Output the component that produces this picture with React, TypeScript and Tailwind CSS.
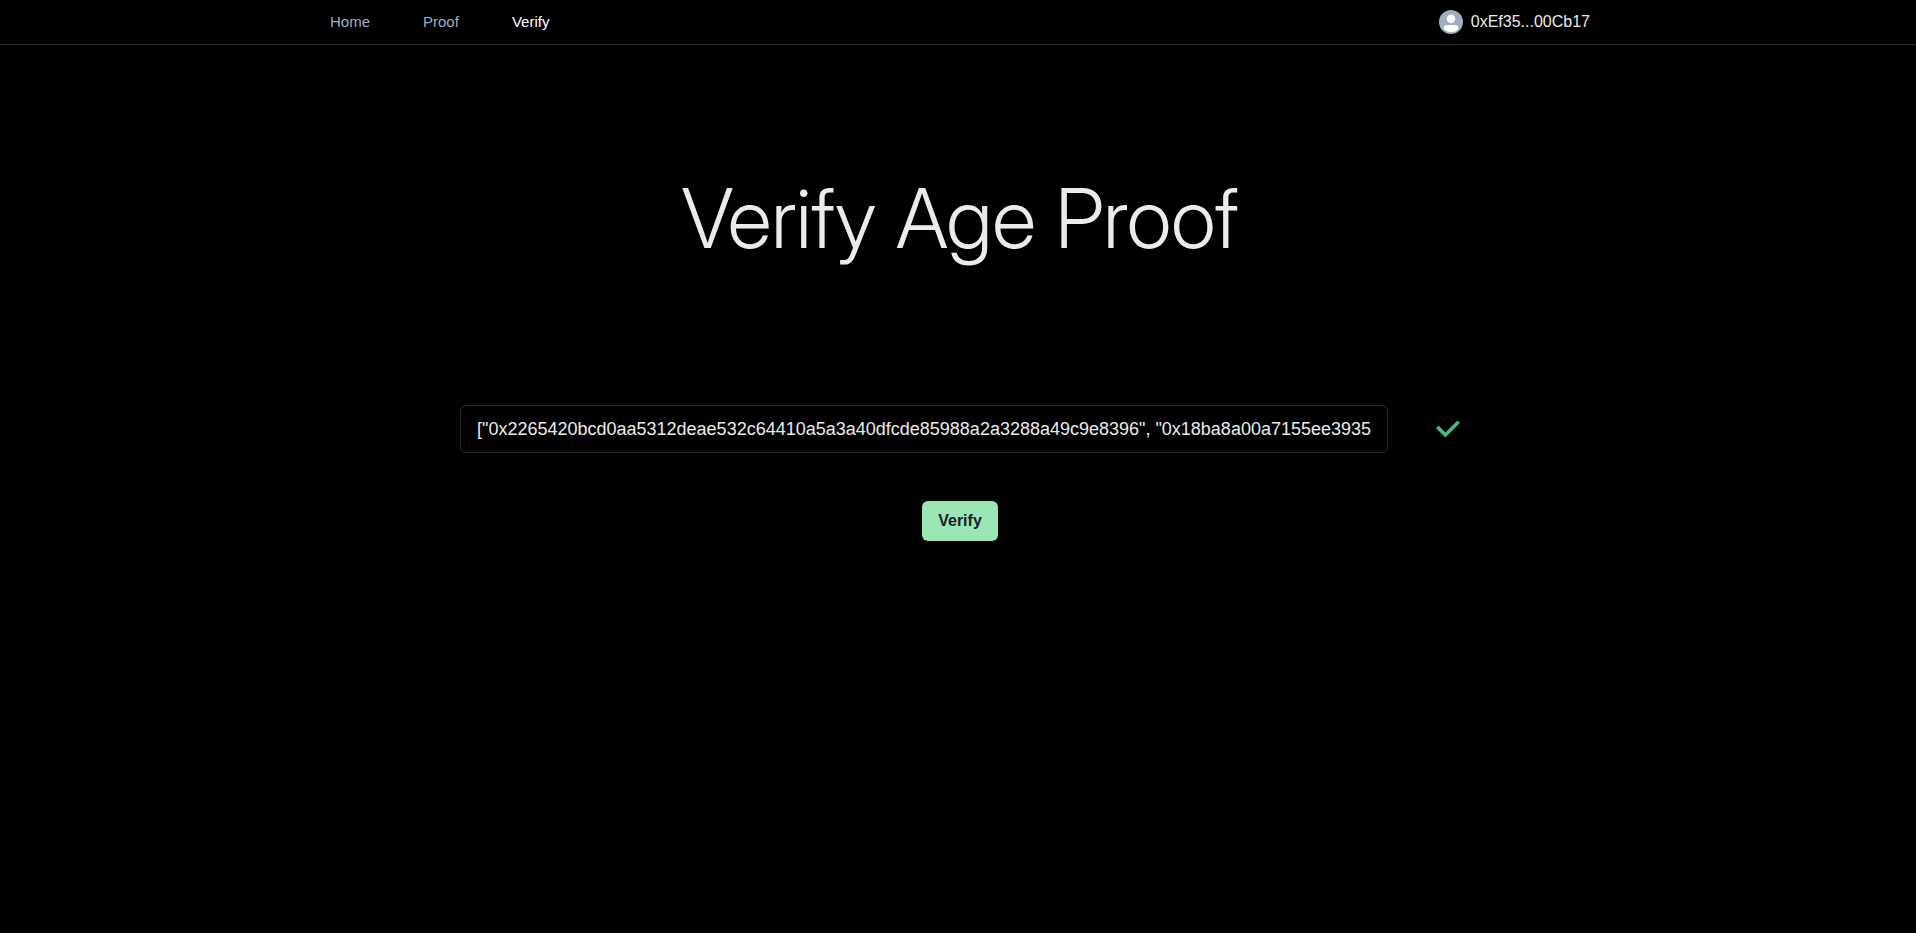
const links = [
  { label: "Home", active: false },
  { label: "Proof", active: false },
  { label: "Verify", active: true },
];

const proof =
  '["0x2265420bcd0aa5312deae532c64410a5a3a40dfcde85988a2a3288a49c9e8396", "0x18ba8a00a7155ee3935';

function Avatar() {
  return (
    <span className="size-6 overflow-hidden rounded-full bg-[#a0aec0] text-white">
      <svg viewBox="0 0 128 128" className="size-6" fill="currentColor" aria-hidden="true">
        <path d="M103,102.1388 C93.094,111.92 79.3504,118 64.1638,118 C48.8056,118 34.9294,111.768 25,101.7892 L25,95.2 C25,86.8096 31.981,80 40.6,80 L87.4,80 C96.019,80 103,86.8096 103,95.2 L103,102.1388 Z" />
        <path d="M64,24 C51.294,24 41,34.294 41,47 C41,59.706 51.294,70 64,70 C76.699,70 87,59.706 87,47 C87,34.294 76.699,24 64,24" />
      </svg>
    </span>
  );
}

function Check() {
  return (
    <svg viewBox="0 0 14 14" className="size-6 shrink-0" fill="#48bb78" role="img" aria-label="Valid proof">
      <polygon points="5.5 12 14 3.5 12.5 2 5.5 9 1.5 5 0 6.5" />
    </svg>
  );
}

export default function App() {
  return (
    <div className="min-h-screen bg-black font-['Liberation_Sans',Arial,sans-serif] text-[#ebebeb]">
      <header className="border-b border-[#303030] pl-1">
        <div className="mx-auto flex h-11 max-w-[1260px] items-center justify-between">
          <nav className="flex gap-[53px] text-[15px]">
            {links.map((l) => (
              <a key={l.label} href="#" className={l.active ? "text-white" : "text-[#a0aec0]"}>
                {l.label}
              </a>
            ))}
          </nav>
          <button type="button" className="flex items-center gap-2 text-base">
            <Avatar />
            0xEf35...00Cb17
          </button>
        </div>
      </header>
      <main className="flex flex-col items-center pt-[126px] pl-1">
        <h1 className="font-['Inter_Display','Inter',sans-serif] text-[82px] leading-[96px] font-[350]">
          Verify Age Proof
        </h1>
        <form className="mt-[138px] flex w-full max-w-[1000px] flex-col items-center gap-12" onSubmit={(e) => e.preventDefault()}>
          <div className="flex w-full items-center gap-12">
            <input
              aria-label="Proof"
              defaultValue={proof}
              className="h-12 min-w-0 flex-1 rounded-md border border-[#2a2a2a] bg-transparent px-4 text-lg outline-none"
            />
            <Check />
          </div>
          <button type="submit" className="h-10 rounded-md bg-[#9ae6b4] px-4 text-base font-semibold text-[#1a202c]">
            Verify
          </button>
        </form>
      </main>
    </div>
  );
}
